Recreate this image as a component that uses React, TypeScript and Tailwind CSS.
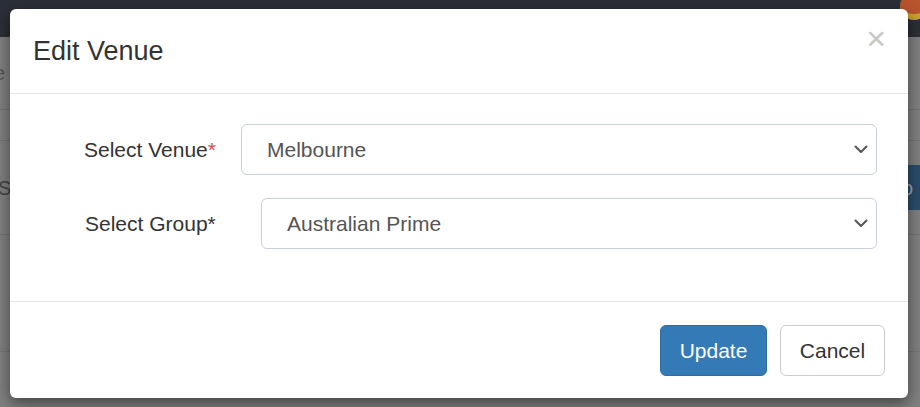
import React from "react";

function Chevron() {
  return (
    <svg width="14" height="9" viewBox="0 0 14 9" fill="none" className="shrink-0">
      <path d="M1.5 1.5 L7 7 L12.5 1.5" stroke="#555" strokeWidth="2" strokeLinecap="round" strokeLinejoin="round" />
    </svg>
  );
}

function Select({ value }: { value: string }) {
  return (
    <div className="flex-1 h-[51px] flex items-center justify-between rounded-[6px] border border-[#c9cfdb] bg-white pl-[25px] pr-[8px]">
      <span className="text-[21px] text-[#555]">{value}</span>
      <Chevron />
    </div>
  );
}

export default function App() {
  return (
    <div
      className="relative w-[920px] h-[407px] overflow-hidden bg-[#808080]"
      style={{ fontFamily: '"Liberation Sans", Arial, sans-serif' }}
    >
      {/* page behind the overlay */}
      <div className="flex flex-col">
        <div className="h-[37px] bg-[#2b2f37] flex justify-end">
          <div className="w-[28px] h-[28px] rounded-full bg-[#b8542e] mt-[-8px] mr-[-8px] border-b-[6px] border-[#c9a22b]" />
        </div>
        <div className="h-[73px] border-b border-[#747474] flex items-center text-[20px] text-[#555]">
          <span className="ml-[-6px]">e</span>
        </div>
        <div className="h-[31px] border-b border-[#747474]" />
        <div className="h-[94px] border-b border-[#747474] flex items-center justify-between text-[20px] text-[#444]">
          <span className="ml-[-2px]">S</span>
          <div className="h-[45px] w-[20px] bg-[#2a4c6b] flex items-center pl-[2px] text-[#9aa6b2]">o</div>
        </div>
        <div className="h-[117px] border-b border-[#747474]" />
      </div>

      {/* modal */}
      <div className="absolute left-[10px] top-[9px] w-[898px] h-[389px] bg-white rounded-[6px] shadow-[0_5px_15px_rgba(0,0,0,0.5)] flex flex-col">
        <div className="h-[85px] border-b border-[#e5e5e5] flex items-start justify-between pl-[23px] pr-[22px]">
          <h4 className="mt-[27px] text-[27px] leading-[30px] text-[#333]">Edit Venue</h4>
          <button className="mt-[9px] text-[34px] font-normal leading-[40px] text-[#c6c6c6]">×</button>
        </div>
        <div className="h-[208px] border-b border-[#e5e5e5] pt-[30px] pr-[31px] flex flex-col gap-[23px]">
          <div className="flex items-center">
            <label className="w-[231px] pl-[74px] text-[21px] text-[#333]">
              Select Venue<span className="text-[#e04a4a]">*</span>
            </label>
            <Select value="Melbourne" />
          </div>
          <div className="flex items-center">
            <label className="w-[251px] pl-[75px] text-[21px] text-[#333]">Select Group*</label>
            <Select value="Australian Prime" />
          </div>
        </div>
        <div className="flex-1 flex items-start justify-end gap-[13px] pt-[23px] pr-[23px]">
          <button className="h-[51px] w-[107px] rounded-[6px] bg-[#337ab7] border border-[#2e6da4] text-white text-[21px]">
            Update
          </button>
          <button className="h-[51px] w-[105px] rounded-[6px] bg-white border border-[#cccccc] text-[#333] text-[21px]">
            Cancel
          </button>
        </div>
      </div>
    </div>
  );
}
